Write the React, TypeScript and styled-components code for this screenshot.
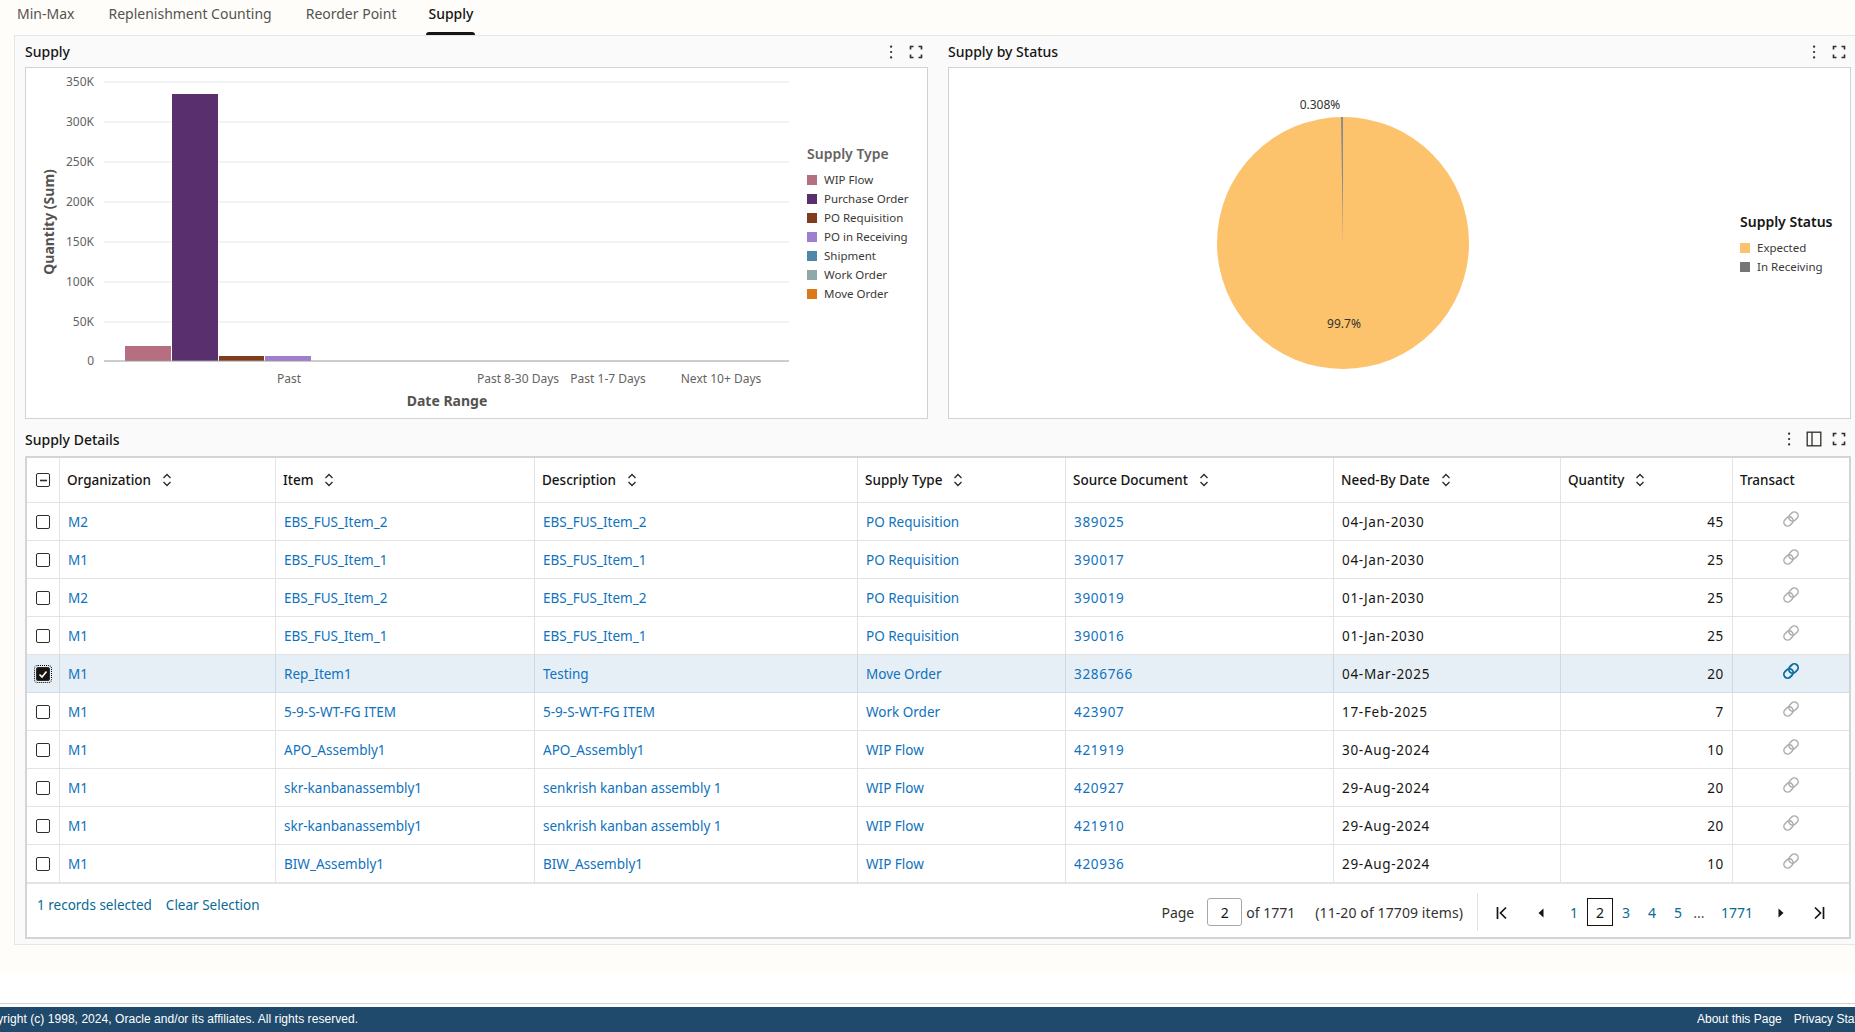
import React from "react";
import styled, { createGlobalStyle, css } from "styled-components";

const FONT = `"Noto Sans", "Open Sans", Arial, sans-serif`;
const INK = "#161513";
const LINK = "#0f72bd";
const TEAL = "#0b6a94";
const LINE = "#e3e3e3";

const Global = createGlobalStyle`
  html, body { margin: 0; padding: 0; background: #fffdf9; }
  body { font-family: ${FONT}; color: ${INK}; overflow: hidden; }
  * { box-sizing: border-box; }
`;

const Page = styled.div`
  width: 1855px; height: 1032px; display: flex; flex-direction: column; overflow: hidden;
`;
const TabBar = styled.nav`
  display: flex; height: 35px; flex: none;
`;
const Tab = styled.div`
  padding: 0 15px; height: 35px;
  &:last-child { margin-left: -2px; }
`;
const TabLabel = styled.span<{ $active?: boolean }>`
  position: relative; display: block; height: 35px; padding: 0 2px; line-height: 28px; font-size: 14px;
  color: ${(p) => (p.$active ? INK : "#55534f")};
  font-weight: ${(p) => (p.$active ? 500 : 400)};
  ${(p) => p.$active && css`
    &::after {
      content: ""; position: absolute; left: 0; right: 0; bottom: 0; height: 3px;
      background: ${INK}; border-radius: 3px 3px 0 0;
    }
  `}
`;
const Panel = styled.main`
  flex: none; height: 910px; margin-left: 14px; padding: 0 4px 0 10px;
  border: 1px solid #e6e6e6; border-right: 0; background: #fafafa;
  display: flex; flex-direction: column;
`;
const ChartRow = styled.section`
  display: grid; grid-template-columns: 903px 903px; column-gap: 20px; flex: none;
`;
const CardHeader = styled.header<{ $top?: number; $h: number }>`
  display: flex; align-items: center; justify-content: space-between;
  height: ${(p) => p.$h}px; padding-top: ${(p) => p.$top ?? 0}px; padding-right: 4px;
`;
const CardTitle = styled.h2`
  margin: 0; font-size: 14px; font-weight: 500; color: ${INK};
`;
const IconRow = styled.div`
  display: flex; gap: 9px; align-items: center;
`;
const ChartBox = styled.div`
  height: 352px; background: #fff; border: 1px solid #d2d2d6; display: flex;
`;
const Plot = styled.svg`
  display: block; flex: none;
`;
const Legend = styled.div<{ $top: number }>`
  padding-top: ${(p) => p.$top}px;
`;
const LegendTitle = styled.div<{ $dark?: boolean }>`
  height: 18px; line-height: 18px; margin-bottom: 7px; font-size: 14px; font-weight: 600;
  color: ${(p) => (p.$dark ? INK : "#65635f")};
`;
const LegendItem = styled.div`
  display: flex; align-items: center; gap: 7px; height: 19px; font-size: 11.500px; color: #3a3936;
`;
const Swatch = styled.i<{ $c: string }>`
  display: block; width: 10px; height: 10px; background: ${(p) => p.$c};
`;
const Tick = styled.text<{ $bold?: boolean }>`
  font-family: ${FONT}; font-size: ${(p) => (p.$bold ? 14 : 12)}px;
  font-weight: ${(p) => (p.$bold ? 700 : 400)};
  fill: ${(p) => (p.$bold ? "#55534f" : "#65635f")};
`;
const PieLabel = styled.text`
  font-family: ${FONT}; font-size: 12px; fill: #33322f;
`;

const COLS = "33px 216px 259px 323px 208px 268px 227px 172px 116px";

const Table = styled.section`
  flex: none; height: 483px; background: #fff; border: 2px solid #d4d4d6;
  display: flex; flex-direction: column; width: 1826px;
`;
const HeadRow = styled.div`
  display: grid; grid-template-columns: ${COLS}; height: 45px; flex: none; border-bottom: 1px solid ${LINE};
`;
const Row = styled.div<{ $sel?: boolean; $last?: boolean }>`
  display: grid; grid-template-columns: ${COLS}; flex: none;
  height: ${(p) => (p.$last ? 39 : 38)}px;
  border-bottom: ${(p) => (p.$last ? "2px" : "1px")} solid ${(p) => (p.$sel ? "#d5dde4" : LINE)};
  background: ${(p) => (p.$sel ? "#e6eff6" : "#fff")};
`;
const Cell = styled.div<{ $sel?: boolean; $right?: boolean; $center?: boolean; $ink?: boolean; $num?: boolean }>`
  display: flex; align-items: center; padding: 0 8px; font-size: 13.500px; white-space: nowrap;
  border-right: 1px solid ${(p) => (p.$sel ? "#d0d8df" : LINE)};
  color: ${(p) => (p.$ink ? INK : LINK)};
  letter-spacing: ${(p) => (p.$num ? "0.7px" : "normal")};
  justify-content: ${(p) => (p.$right ? "flex-end" : p.$center ? "center" : "flex-start")};
  &:last-child { border-right: 0; }
`;
const HeadCell = styled.div<{ $center?: boolean }>`
  display: flex; align-items: center; padding: 0 7px; font-size: 13.500px; font-weight: 500; color: ${INK};
  border-right: 1px solid ${LINE};
  justify-content: ${(p) => (p.$center ? "center" : "flex-start")};
  &:last-child { border-right: 0; }
`;
const SortIcon = styled.svg`
  margin-left: 11px; flex: none;
`;
const Box = styled.span<{ $on?: boolean }>`
  display: flex; align-items: center; justify-content: center; flex: none;
  width: 14px; height: 14px; border-radius: 2px; border: 1.5px solid #2e2d2a;
  background: ${(p) => (p.$on ? INK : "#fff")};
  ${(p) => p.$on && css`outline: 1px dotted #000; outline-offset: 1px;`}
`;
const TableFooter = styled.footer`
  flex: 1; display: flex; justify-content: space-between; padding: 0 6px 0 10px;
`;
const Selection = styled.div`
  display: flex; gap: 14px; padding-top: 11px; font-size: 13.500px; color: ${TEAL}; line-height: 20px;
`;
const Pager = styled.div`
  display: flex; align-items: center; height: 38px; margin-top: 9px; font-size: 14px; color: #33322f;
`;
const PageInput = styled.span`
  display: flex; align-items: center; justify-content: center;
  width: 35px; height: 28px; margin: 0 4px 0 13px; border: 1px solid #a9a7a3; border-radius: 3px; color: ${INK};
`;
const Count = styled.span`
  margin-left: 20px; letter-spacing: 0.1px;
`;
const Divider = styled.span`
  width: 1px; height: 38px; margin-left: 14px; background: #e2e2e2;
`;
const PagerBtn = styled.span<{ $w: number }>`
  display: flex; align-items: center; justify-content: center; width: ${(p) => p.$w}px; height: 28px; padding-top: 2px;
`;
const PageNum = styled.span<{ $cur?: boolean; $wide?: boolean }>`
  display: flex; align-items: center; justify-content: center; height: 28px;
  width: ${(p) => (p.$wide ? 60 : 26)}px;
  color: ${(p) => (p.$cur ? INK : TEAL)};
  border: ${(p) => (p.$cur ? `1px solid ${INK}` : "0")};
`;
const Ellipsis = styled.span`
  width: 16px; text-align: center; color: #55534f;
`;
const Gap = styled.span`
  width: 6px;
`;
const Spacer = styled.div`
  flex: none; height: 28px;
`;
const WhiteBand = styled.div`
  flex: none; height: 34px; background: #fff; padding-bottom: 3px;
`;
const WhiteRule = styled.div`
  height: 100%; border-bottom: 1px solid #d0d0d0;
`;
const BottomBar = styled.footer`
  flex: 1; background: #1f4a6c; color: #fff; display: flex; align-items: center; justify-content: space-between;
  font-family: "Liberation Sans", Arial, sans-serif; font-size: 12px; overflow: hidden; padding-bottom: 2px;
`;
const Copy = styled.span`
  margin-left: -25px; white-space: nowrap; letter-spacing: 0.05px;
`;
const BarLinks = styled.span`
  flex: none; display: flex; gap: 12px; width: 158px; overflow: hidden; white-space: nowrap;
`;

const Kebab = () => (
  <svg width="16" height="16" viewBox="0 0 16 16" fill="#2e2d2a">
    <rect x="7" y="1.500" width="2.200" height="2.200" rx="1" />
    <rect x="7" y="6.900" width="2.200" height="2.200" rx="1" />
    <rect x="7" y="12.300" width="2.200" height="2.200" rx="1" />
  </svg>
);
const Expand = () => (
  <svg width="16" height="16" viewBox="0 0 16 16" fill="none" stroke="#2e2d2a" strokeWidth="1.600">
    <path d="M2.500 5.500V2.500H5.500M10.500 2.500H13.500V5.500M13.500 10.500V13.500H10.500M5.500 13.500H2.500V10.500" />
  </svg>
);
const Columns = () => (
  <svg width="16" height="16" viewBox="0 0 16 16" fill="none" stroke="#2e2d2a" strokeWidth="1.300">
    <rect x="1.200" y="1.200" width="13.600" height="13.600" />
    <path d="M6 1.200V14.800" />
  </svg>
);
const Sort = () => (
  <SortIcon width="10" height="14" viewBox="0 0 10 14" fill="none" stroke="#2e2d2a" strokeWidth="1.400">
    <path d="M1.500 5 5 1.500 8.500 5M1.500 9 5 12.500 8.500 9" />
  </SortIcon>
);
const Chain = ({ on }: { on?: boolean }) => (
  <svg width="18" height="18" viewBox="0 0 18 18" fill="none" stroke={on ? "#0a6d9e" : "#aeaca8"} strokeWidth={on ? 1.800 : 1.500} style={{ marginTop: -5 }}>
    <g transform="rotate(-45 9 9)">
      <rect x="0.500" y="5.250" width="10" height="7.500" rx="3.750" />
      <rect x="7.500" y="5.250" width="10" height="7.500" rx="3.750" />
    </g>
  </svg>
);
const First = () => (
  <svg width="14" height="14" viewBox="0 0 14 14" fill="none" stroke={INK} strokeWidth="1.700">
    <path d="M2.500 1V13M11 1.500 5.500 7 11 12.500" />
  </svg>
);
const Last = () => (
  <svg width="14" height="14" viewBox="0 0 14 14" fill="none" stroke={INK} strokeWidth="1.700">
    <path d="M11.500 1V13M3 1.500 8.500 7 3 12.500" />
  </svg>
);
const Prev = () => (
  <svg width="8" height="12" viewBox="0 0 8 12" fill={INK}><path d="M6.500 1.500V10.500L1.500 6Z" /></svg>
);
const Next = () => (
  <svg width="8" height="12" viewBox="0 0 8 12" fill={INK}><path d="M1.500 1.500V10.500L6.500 6Z" /></svg>
);

const GRID = [
  { l: "350K", y: 14 }, { l: "300K", y: 54 }, { l: "250K", y: 94 }, { l: "200K", y: 134 },
  { l: "150K", y: 174 }, { l: "100K", y: 214 }, { l: "50K", y: 254 },
];
const BARS = [
  { x: 99, w: 46, y: 278, c: "#b56f80" },
  { x: 146, w: 46, y: 26, c: "#5a2f6d" },
  { x: 193, w: 45, y: 288, c: "#7f3d1d" },
  { x: 239, w: 46, y: 288, c: "#9d7fcd" },
];
const XLABELS = [
  { l: "Past", x: 263 }, { l: "Past 8-30 Days", x: 492 }, { l: "Past 1-7 Days", x: 582 }, { l: "Next 10+ Days", x: 695 },
];
const TYPES = [
  ["WIP Flow", "#b56f80"], ["Purchase Order", "#5a2f6d"], ["PO Requisition", "#7f3d1d"], ["PO in Receiving", "#9d7fcd"],
  ["Shipment", "#4f87ab"], ["Work Order", "#8fa9a9"], ["Move Order", "#d9791a"],
];
const HEAD = ["Organization", "Item", "Description", "Supply Type", "Source Document", "Need-By Date", "Quantity"];
const ROWS = [
  ["M2", "EBS_FUS_Item_2", "EBS_FUS_Item_2", "PO Requisition", "389025", "04-Jan-2030", "45"],
  ["M1", "EBS_FUS_Item_1", "EBS_FUS_Item_1", "PO Requisition", "390017", "04-Jan-2030", "25"],
  ["M2", "EBS_FUS_Item_2", "EBS_FUS_Item_2", "PO Requisition", "390019", "01-Jan-2030", "25"],
  ["M1", "EBS_FUS_Item_1", "EBS_FUS_Item_1", "PO Requisition", "390016", "01-Jan-2030", "25"],
  ["M1", "Rep_Item1", "Testing", "Move Order", "3286766", "04-Mar-2025", "20"],
  ["M1", "5-9-S-WT-FG ITEM", "5-9-S-WT-FG ITEM", "Work Order", "423907", "17-Feb-2025", "7"],
  ["M1", "APO_Assembly1", "APO_Assembly1", "WIP Flow", "421919", "30-Aug-2024", "10"],
  ["M1", "skr-kanbanassembly1", "senkrish kanban assembly 1", "WIP Flow", "420927", "29-Aug-2024", "20"],
  ["M1", "skr-kanbanassembly1", "senkrish kanban assembly 1", "WIP Flow", "421910", "29-Aug-2024", "20"],
  ["M1", "BIW_Assembly1", "BIW_Assembly1", "WIP Flow", "420936", "29-Aug-2024", "10"],
];

export default function App() {
  return (
    <Page>
      <Global />
      <TabBar>
        <Tab><TabLabel>Min-Max</TabLabel></Tab>
        <Tab><TabLabel>Replenishment Counting</TabLabel></Tab>
        <Tab><TabLabel>Reorder Point</TabLabel></Tab>
        <Tab><TabLabel $active>Supply</TabLabel></Tab>
      </TabBar>
      <Panel>
        <ChartRow>
          <div>
            <CardHeader $h={31}>
              <CardTitle>Supply</CardTitle>
              <IconRow><Kebab /><Expand /></IconRow>
            </CardHeader>
            <ChartBox>
              <Plot width="781" height="350" viewBox="0 0 781 350">
                {GRID.map((g) => (
                  <g key={g.l}>
                    <line x1="78" x2="763" y1={g.y} y2={g.y} stroke="#e8e8ee" />
                    <Tick x="68" y={g.y + 4} textAnchor="end">{g.l}</Tick>
                  </g>
                ))}
                <Tick x="68" y="297" textAnchor="end">0</Tick>
                {BARS.map((b) => (
                  <rect key={b.x} x={b.x} y={b.y} width={b.w} height={293 - b.y} fill={b.c} />
                ))}
                <line x1="78" x2="763" y1="293" y2="293" stroke="#9a9a9a" />
                {XLABELS.map((x) => (
                  <Tick key={x.l} x={x.x} y="315" textAnchor="middle">{x.l}</Tick>
                ))}
                <Tick $bold x="421" y="338" textAnchor="middle">Date Range</Tick>
                <Tick $bold x="0" y="0" textAnchor="middle" transform="translate(28 154) rotate(-90)">Quantity (Sum)</Tick>
              </Plot>
              <Legend $top={77}>
                <LegendTitle>Supply Type</LegendTitle>
                {TYPES.map(([n, c]) => (
                  <LegendItem key={n}><Swatch $c={c} />{n}</LegendItem>
                ))}
              </Legend>
            </ChartBox>
          </div>
          <div>
            <CardHeader $h={31}>
              <CardTitle>Supply by Status</CardTitle>
              <IconRow><Kebab /><Expand /></IconRow>
            </CardHeader>
            <ChartBox>
              <Plot width="791" height="350" viewBox="0 0 791 350">
                <circle cx="394" cy="175" r="126" fill="#fcc26c" />
                <path d="M394 175 L392 49 A126 126 0 0 1 394 49Z" fill="#8a8a8a" />
                <PieLabel x="371" y="41" textAnchor="middle">0.308%</PieLabel>
                <PieLabel x="395" y="260" textAnchor="middle">99.7%</PieLabel>
              </Plot>
              <Legend $top={145}>
                <LegendTitle $dark>Supply Status</LegendTitle>
                <LegendItem><Swatch $c="#fcc26c" />Expected</LegendItem>
                <LegendItem><Swatch $c="#757575" />In Receiving</LegendItem>
              </Legend>
            </ChartBox>
          </div>
        </ChartRow>
        <CardHeader $h={37} $top={3}>
          <CardTitle>Supply Details</CardTitle>
          <IconRow><Kebab /><Columns /><Expand /></IconRow>
        </CardHeader>
        <Table>
          <HeadRow>
            <HeadCell $center><Box><svg width="9" height="9" viewBox="0 0 9 9"><path d="M1 4.500H8" stroke="#2e2d2a" strokeWidth="1.600" /></svg></Box></HeadCell>
            {HEAD.map((h) => (
              <HeadCell key={h}>{h}<Sort /></HeadCell>
            ))}
            <HeadCell>Transact</HeadCell>
          </HeadRow>
          {ROWS.map((r, i) => {
            const sel = i === 4;
            return (
              <Row key={i} $sel={sel} $last={i === ROWS.length - 1}>
                <Cell $sel={sel} $center>
                  <Box $on={sel}>
                    {sel && (
                      <svg width="10" height="10" viewBox="0 0 10 10" fill="none" stroke="#fff" strokeWidth="1.600">
                        <path d="M1.500 5.500 4 8 8.500 2.500" />
                      </svg>
                    )}
                  </Box>
                </Cell>
                {r.slice(0, 4).map((v, j) => (
                  <Cell key={j} $sel={sel}>{v}</Cell>
                ))}
                <Cell $sel={sel} $num>{r[4]}</Cell>
                <Cell $sel={sel} $ink $num>{r[5]}</Cell>
                <Cell $sel={sel} $ink $right $num>{r[6]}</Cell>
                <Cell $sel={sel} $center><Chain on={sel} /></Cell>
              </Row>
            );
          })}
          <TableFooter>
            <Selection>
              <span>1 records selected</span>
              <span>Clear Selection</span>
            </Selection>
            <Pager>
              <span>Page</span>
              <PageInput>2</PageInput>
              <span>of 1771</span>
              <Count>(11-20 of 17709 items)</Count>
              <Divider />
              <PagerBtn $w={48}><First /></PagerBtn>
              <PagerBtn $w={29}><Prev /></PagerBtn>
              <Gap />
              <PageNum>1</PageNum>
              <PageNum $cur>2</PageNum>
              <PageNum>3</PageNum>
              <PageNum>4</PageNum>
              <PageNum>5</PageNum>
              <Ellipsis>...</Ellipsis>
              <PageNum $wide>1771</PageNum>
              <PagerBtn $w={28}><Next /></PagerBtn>
              <PagerBtn $w={48}><Last /></PagerBtn>
            </Pager>
          </TableFooter>
        </Table>
      </Panel>
      <Spacer />
      <WhiteBand><WhiteRule /></WhiteBand>
      <BottomBar>
        <Copy>Copyright (c) 1998, 2024, Oracle and/or its affiliates. All rights reserved.</Copy>
        <BarLinks>
          <span>About this Page</span>
          <span>Privacy Statement</span>
        </BarLinks>
      </BottomBar>
    </Page>
  );
}
